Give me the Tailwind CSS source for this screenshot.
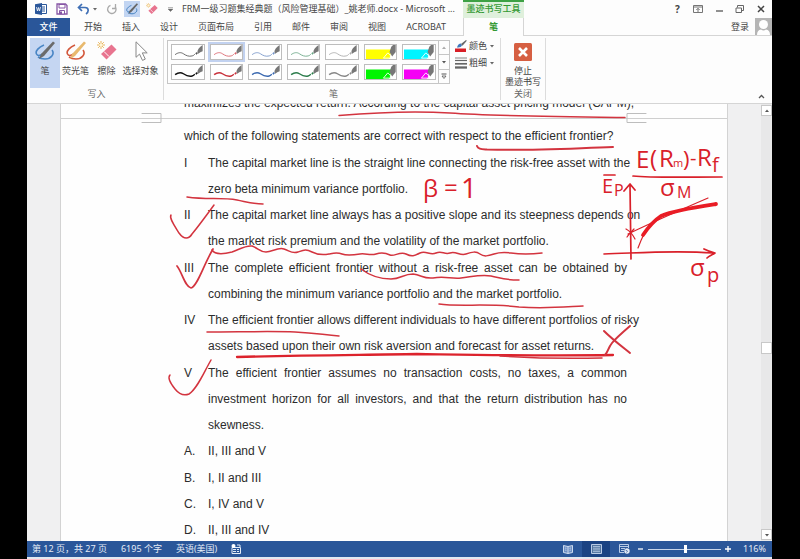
<!DOCTYPE html>
<html lang="zh-CN">
<head>
    <meta charset="UTF-8">
    <meta name="viewport" content="width=device-width, initial-scale=1.0">
    <title>FRM一级习题集经典题（风险管理基础）_姚老师.docx - Microsoft Word</title>
    <script src="https://cdn.jsdelivr.net/npm/@tailwindcss/browser@4"></script>
</head>
<body class="bg-black">
    <!-- Shared icon shapes -->
    <svg class="hidden" aria-hidden="true">
        <symbol id="pen-thin" viewBox="0 0 34 16">
            <path d="M2.500 11C6 8.500 9 8 12 10S18 13.500 22 12.500q2-.5 3-2" fill="none" stroke="currentColor" stroke-width="1"/>
            <path d="M25.500 9.500l2-1.500 1 1.500-1.500 1.500z" fill="currentColor"/>
            <path d="M28 8q0-4 6-8v7q-3 1-5 3z" fill="#777"/>
        </symbol>
        <symbol id="pen-thick" viewBox="0 0 34 16">
            <path d="M2.500 11C6 8.500 9 8 12 10S18 13.500 22 12.500q2-.5 3-2" fill="none" stroke="currentColor" stroke-width="1.700"/>
            <path d="M25.500 9.500l2-1.500 1 1.500-1.500 1.500z" fill="currentColor"/>
            <path d="M28 8q0-4 6-8v7q-3 1-5 3z" fill="#777"/>
        </symbol>
        <symbol id="marker" viewBox="0 0 34 16">
            <path d="M0 5h30l-4 11H0z" fill="currentColor"/>
            <path d="M20 15l5-6 3 3v3z" fill="currentColor" stroke="#fff" stroke-width="1"/>
            <path d="M27 8l2-6 2-2h3v8l-4 5z" fill="#777"/>
        </symbol>
        <symbol id="ink-pen" viewBox="0 0 20 20">
            <path d="M9 4C4 6 0 10 1.500 13s6 1 10-3M17 9c3 4-1 9-7 9-3 0-5-.5-7-2" fill="none" stroke="currentColor" stroke-width="1.600"/>
            <path d="M18 .5l2 1.500L9 15l-5 3 2-5z"/>
        </symbol>
        <symbol id="eraser" viewBox="0 0 20 20">
            <path d="M14.500 3.500l5 5-10 10-5.500-5.500z" fill="#e8748f"/>
            <path d="M7 10.500l5 5" stroke="#fff" stroke-width="1"/>
            <path d="M4 0v8M0 4h8M1.200 1.200l5.600 5.600M6.800 1.200L1.200 6.800" stroke="#e9b65c" stroke-width="1"/>
            <circle cx="4" cy="4" r="1.500" fill="#fff6d8"/>
        </symbol>
    </svg>

    <div class="mr-7 ml-[27px] flex h-screen flex-col bg-[#fdfdfd] text-[9px] leading-3 text-[#444] [font-family:'Noto_Sans','Noto_Sans_CJK_SC',sans-serif]">
        <!-- Title bar -->
        <header class="flex h-[18px] shrink-0 items-center">
            <div class="flex w-[155px] items-center pl-2">
                <svg class="h-3 w-3" viewBox="0 0 12 12" aria-label="Word">
                    <path d="M6 1.500h5.500v9H6z" fill="#fff" stroke="#2b579a"/>
                    <path d="M7 4h3M7 6h3M7 8h3" stroke="#2b579a"/>
                    <path d="M0 1.300L7 0v12l-7-1.300z" fill="#2b579a"/>
                    <path d="M1.500 4l1 4 1-3.500 1 3.500 1-4" fill="none" stroke="#fff" stroke-width=".8"/>
                </svg>
                <button class="ml-[9px]" aria-label="保存">
                    <svg class="h-3 w-3" viewBox="0 0 12 12"><path d="M1 1h8.500L11 2.500V11H1z" fill="#fff" stroke="#8756a5" stroke-width="1.300"/><path d="M3 1.500h6v3.500H3zM3.500 7.500h5V11h-5z" fill="#fff" stroke="#8756a5"/><path d="M4 8.500h2V11H4z" fill="#8756a5"/></svg>
                </button>
                <button class="ml-[9px] flex items-center gap-1" aria-label="撤消">
                    <svg class="h-3 w-3" viewBox="0 0 12 12"><path d="M1.500 4.500H8c4 0 4 4.500 1 6.500M5 1L1.500 4.500 5 8" fill="none" stroke="#3f6fb5" stroke-width="1.700"/></svg>
                    <svg class="h-1 w-1" viewBox="0 0 4 4"><path d="M0 1h4L2 3.500z" fill="#666"/></svg>
                </button>
                <button class="ml-[9px]" aria-label="恢复">
                    <svg class="h-3 w-3" viewBox="0 0 12 12"><path d="M4.500 2.300A4.200 4.200 0 1 0 9 3.500M6 5.500h3.500V1" fill="none" stroke="#aaa" stroke-width="1.300"/></svg>
                </button>
                <button class="ml-[6px] flex h-4 w-4 items-center justify-center bg-[#c2d5f2]" aria-label="笔">
                    <svg class="h-3 w-3 fill-[#666] text-[#3f7dbd]"><use href="#ink-pen"/></svg>
                </button>
                <button class="ml-[6px]" aria-label="橡皮擦"><svg class="h-3 w-3"><use href="#eraser"/></svg></button>
                <button class="ml-[10px]" aria-label="自定义快速访问工具栏">
                    <svg class="h-[5px] w-[5px]" viewBox="0 0 5 5"><path d="M0 .5h5M0 2h5L2.500 4.500z" fill="#666" stroke="#777" stroke-width=".5"/></svg>
                </button>
            </div>
            <h1 class="w-[281px] whitespace-nowrap">FRM一级习题集经典题（风险管理基础）_姚老师.docx - Microsoft ...</h1>
            <div class="h-full w-[61px] border-t-2 border-[#3da144] bg-[#dff0dc] pt-px text-center font-medium text-[#339933]">墨迹书写工具</div>
            <div class="ml-auto flex items-center gap-[11px] pr-[6px]">
                <button class="w-[9px] text-[10px] font-bold" aria-label="帮助">?</button>
                <button aria-label="功能区显示选项">
                    <svg class="h-[10px] w-[10px]" viewBox="0 0 10 10"><path d="M.5 1.500h9v7h-9zM.5 3h9M5 8V4.500M3.300 6L5 4.300 6.700 6" fill="none" stroke="#666" stroke-width=".9"/></svg>
                </button>
                <button aria-label="最小化"><svg class="h-[10px] w-[10px]" viewBox="0 0 10 10"><path d="M2 7h7" stroke="#555" stroke-width="1.300"/></svg></button>
                <button aria-label="还原"><svg class="h-[10px] w-[10px]" viewBox="0 0 10 10"><path d="M2.500 3.500v-2h6v5h-2M1 4h5.500v4.500H1z" fill="none" stroke="#666"/></svg></button>
                <button aria-label="关闭"><svg class="h-[10px] w-[10px]" viewBox="0 0 10 10"><path d="M2 2l6 6M8 2L2 8" stroke="#444" stroke-width="1.500"/></svg></button>
            </div>
        </header>

        <!-- Ribbon tabs -->
        <nav class="flex h-[18px] shrink-0 items-stretch">
            <button class="w-[43px] bg-[#2a5699] font-medium text-white">文件</button>
            <div class="flex w-[393px] items-center gap-5 border-b border-[#d5d5d5] pl-[14px] whitespace-nowrap">
                <button>开始</button>
                <button>插入</button>
                <button>设计</button>
                <button>页面布局</button>
                <button>引用</button>
                <button>邮件</button>
                <button>审阅</button>
                <button>视图</button>
                <button>ACROBAT</button>
            </div>
            <button class="w-[61px] border-x border-[#d5d5d5] font-bold text-[#339933]">笔</button>
            <div class="flex flex-1 items-center justify-end gap-[6px] border-b border-[#d5d5d5]">
                <a href="#">登录</a>
                <svg class="h-[17px] w-[17px] bg-[#b5b5b5]" viewBox="0 0 17 17"><circle cx="8.500" cy="6.500" r="4.500" fill="#fff"/><path d="M2 17q0-5 4-5.500 2.500 2 5 0 4 .5 4 5.500z" fill="#fff"/></svg>
            </div>
        </nav>

        <!-- Ribbon -->
        <section class="flex h-[68px] shrink-0 border-b border-[#d5d5d5] pt-[2px] pb-[3px]">
            <div class="flex w-[137px] flex-col justify-between border-r border-[#dcdcdc] pl-[3px]">
                <div class="flex">
                    <button class="flex h-[50px] w-[30px] flex-col items-center gap-1 bg-[#c5d6f2] pt-[3px]">
                        <svg class="h-5 w-5 fill-[#6b6b6b] text-[#4a86c5]"><use href="#ink-pen"/></svg>笔
                    </button>
                    <button class="flex h-[50px] w-[31px] flex-col items-center gap-1 pt-[3px]">
                        <svg class="h-5 w-5 fill-[#e8b96e] text-[#d3583c]"><use href="#ink-pen"/></svg>荧光笔
                    </button>
                    <button class="flex h-[50px] w-[31px] flex-col items-center gap-1 pt-[3px]">
                        <svg class="h-5 w-5"><use href="#eraser"/></svg>擦除
                    </button>
                    <button class="flex h-[50px] w-[37px] flex-col items-center gap-1 pt-[3px] whitespace-nowrap">
                        <svg class="h-5 w-5" viewBox="0 0 20 20"><path d="M5 .8v15.500l3.500-3.200 3 6.300 2.800-1.300-3-6.200h4.900z" fill="#fff" stroke="#888"/></svg>选择对象
                    </button>
                </div>
                <div class="text-center text-[#666]">写入</div>
            </div>

            <div class="flex w-[337px] flex-col justify-between border-r border-[#dcdcdc] pl-[3px]">
                <div class="flex gap-[5px] pt-[2px]">
                    <!-- Pen gallery -->
                    <div class="flex h-11 w-[283px] border border-[#c6c6c6]">
                        <div class="grid flex-1 grid-cols-7 gap-x-px py-px pl-px">
                            <button class="h-5 border border-transparent p-px" aria-label="黑色细笔"><svg class="h-full w-full border border-[#bdbdbd] bg-white text-[#555]"><use href="#pen-thin"/></svg></button>
                            <button class="h-5 bg-[#c2d2f0] p-[2px]" aria-label="红色细笔"><svg class="h-full w-full border border-[#bdbdbd] bg-white text-[#d9636b]"><use href="#pen-thin"/></svg></button>
                            <button class="h-5 border border-transparent p-px" aria-label="蓝色细笔"><svg class="h-full w-full border border-[#bdbdbd] bg-white text-[#7796c8]"><use href="#pen-thin"/></svg></button>
                            <button class="h-5 border border-transparent p-px" aria-label="绿色细笔"><svg class="h-full w-full border border-[#bdbdbd] bg-white text-[#6aa787]"><use href="#pen-thin"/></svg></button>
                            <button class="h-5 border border-transparent p-px" aria-label="灰色细笔"><svg class="h-full w-full border border-[#bdbdbd] bg-white text-[#aaa]"><use href="#pen-thin"/></svg></button>
                            <button class="h-5 border border-transparent p-px" aria-label="黄色荧光笔"><svg class="h-full w-full border border-[#bdbdbd] bg-white text-[#ffff00]"><use href="#marker"/></svg></button>
                            <button class="h-5 border border-transparent p-px" aria-label="青色荧光笔"><svg class="h-full w-full border border-[#bdbdbd] bg-white text-[#00f4ff]"><use href="#marker"/></svg></button>
                            <button class="h-5 border border-transparent p-px" aria-label="黑色粗笔"><svg class="h-full w-full border border-[#bdbdbd] bg-white text-[#111]"><use href="#pen-thick"/></svg></button>
                            <button class="h-5 border border-transparent p-px" aria-label="红色粗笔"><svg class="h-full w-full border border-[#bdbdbd] bg-white text-[#c8323c]"><use href="#pen-thick"/></svg></button>
                            <button class="h-5 border border-transparent p-px" aria-label="蓝色粗笔"><svg class="h-full w-full border border-[#bdbdbd] bg-white text-[#3b69b0]"><use href="#pen-thick"/></svg></button>
                            <button class="h-5 border border-transparent p-px" aria-label="绿色粗笔"><svg class="h-full w-full border border-[#bdbdbd] bg-white text-[#2d7d4c]"><use href="#pen-thick"/></svg></button>
                            <button class="h-5 border border-transparent p-px" aria-label="灰色粗笔"><svg class="h-full w-full border border-[#bdbdbd] bg-white text-[#888]"><use href="#pen-thick"/></svg></button>
                            <button class="h-5 border border-transparent p-px" aria-label="绿色荧光笔"><svg class="h-full w-full border border-[#bdbdbd] bg-white text-[#00f500]"><use href="#marker"/></svg></button>
                            <button class="h-5 border border-transparent p-px" aria-label="粉色荧光笔"><svg class="h-full w-full border border-[#bdbdbd] bg-white text-[#f500f5]"><use href="#marker"/></svg></button>
                        </div>
                        <div class="flex w-[11px] flex-col divide-y divide-[#c6c6c6] border-l border-[#c6c6c6]">
                            <button class="flex flex-1 items-center justify-center" aria-label="上一行"><svg class="h-1 w-1" viewBox="0 0 4 4"><path d="M0 3h4L2 .5z" fill="#aaa"/></svg></button>
                            <button class="flex flex-1 items-center justify-center" aria-label="下一行"><svg class="h-1 w-1" viewBox="0 0 4 4"><path d="M0 1h4L2 3.500z" fill="#555"/></svg></button>
                            <button class="flex flex-1 items-center justify-center" aria-label="其他"><svg class="h-[6px] w-[6px]" viewBox="0 0 6 6"><path d="M.5 1h5" stroke="#555"/><path d="M1 3h4L3 5.500z" fill="none" stroke="#555" stroke-width=".8"/></svg></button>
                        </div>
                    </div>
                    <div class="flex flex-col gap-[5px]">
                        <button class="flex items-center gap-[2px]">
                            <svg class="h-3 w-3" viewBox="0 0 12 12"><path d="M0 8.500h11V12H0z" fill="#d81e26"/><path d="M2 7.500q1-4 4-4l1 2q-1 2.500-5 2z" fill="#3f78bd"/><path d="M6 4l5-4 .8.800-4.300 5z" fill="#666"/></svg>
                            颜色
                            <svg class="ml-px h-1 w-1" viewBox="0 0 4 4"><path d="M0 1h4L2 3.500z" fill="#666"/></svg>
                        </button>
                        <button class="flex items-center gap-[2px]">
                            <svg class="h-3 w-3" viewBox="0 0 12 12"><path d="M0 1h12" stroke="#666" stroke-width=".8"/><path d="M0 3.500h12" stroke="#666" stroke-width="1.200"/><path d="M0 6.800h12" stroke="#666" stroke-width="1.700"/><path d="M0 10.500h12" stroke="#666" stroke-width="2.300"/></svg>
                            粗细
                            <svg class="ml-px h-1 w-1" viewBox="0 0 4 4"><path d="M0 1h4L2 3.500z" fill="#666"/></svg>
                        </button>
                    </div>
                </div>
                <div class="text-center text-[#666]">笔</div>
            </div>

            <div class="flex w-[45px] flex-col items-center justify-between border-r border-[#dcdcdc] pt-[5px]">
                <button class="flex flex-col items-center leading-[11px] whitespace-nowrap">
                    <svg class="mb-1 h-[18px] w-[18px]" viewBox="0 0 18 18"><rect width="18" height="18" rx="1.500" fill="#d65f42"/><path d="M5 5l8 8M13 5l-8 8" stroke="#fff" stroke-width="2.600"/></svg>
                    停止<br>墨迹书写
                </button>
                <div class="text-[#666]">关闭</div>
            </div>
            <button class="mt-auto ml-auto pr-[7px]" aria-label="折叠功能区"><svg class="h-[7px] w-[7px]" viewBox="0 0 7 7"><path d="M1 5l2.500-2.500L6 5" fill="none" stroke="#555" stroke-width="1.300"/></svg></button>
        </section>

        <!-- Document area -->
        <main class="flex min-h-0 flex-1 bg-[#f0f0f1]">
            <div class="w-[34px] shrink-0 border-r border-[#d3d3d3]"></div>
            <article class="relative flex-1 overflow-hidden bg-[#fefefe] text-[12px] leading-[26px] text-[#2c2c2c] [font-family:'Liberation_Sans',Arial,sans-serif]">
                <!-- End of the previous page -->
                <div class="flex h-[15px] items-start overflow-hidden border-b border-[#cfcfcf] pl-[123px]">
                    <p class="-mt-2 w-[443px] leading-[14px] whitespace-nowrap [text-align-last:justify]">maximizes the expected return. According to the capital asset pricing model (CAPM),</p>
                </div>

                <div class="w-[566px] pt-[4px] pl-[123px] whitespace-nowrap">
                    <p>which of the following statements are correct with respect to the efficient frontier?</p>
                    <dl class="grid grid-cols-[24px_minmax(0,1fr)]">
                        <dt class="pt-px">I</dt>
                        <dd class="pt-px">
                            <span class="block [text-align-last:justify]">The capital market line is the straight line connecting the risk-free asset with the</span>
                            zero beta minimum variance portfolio.
                        </dd>
                        <dt>II</dt>
                        <dd>
                            <span class="block [text-align-last:justify]">The capital market line always has a positive slope and its steepness depends on</span>
                            the market risk premium and the volatility of the market portfolio.
                        </dd>
                        <dt class="pt-px">III</dt>
                        <dd class="pt-px">
                            <span class="block [text-align-last:justify]">The complete efficient frontier without a risk-free asset can be obtained by</span>
                            combining the minimum variance portfolio and the market portfolio.
                        </dd>
                        <dt>IV</dt>
                        <dd>
                            <span class="block [text-align-last:justify]">The efficient frontier allows different individuals to have different portfolios of risky</span>
                            assets based upon their own risk aversion and forecast for asset returns.
                        </dd>
                        <dt class="pt-px">V</dt>
                        <dd class="pt-px">
                            <span class="block [text-align-last:justify]">The efficient frontier assumes no transaction costs, no taxes, a common</span>
                            <span class="block [text-align-last:justify]">investment horizon for all investors, and that the return distribution has no</span>
                            skewness.
                        </dd>
                        <dt>A.</dt>
                        <dd>II, III and V</dd>
                        <dt class="pt-px">B.</dt>
                        <dd class="pt-px">I, II and III</dd>
                        <dt>C.</dt>
                        <dd>I, IV and V</dd>
                        <dt>D.</dt>
                        <dd>II, III and IV</dd>
                    </dl>
                </div>

                <!-- Ink layer -->
                <svg class="absolute top-0 left-0 h-[437px] w-[666px]" viewBox="61 104 666 437" fill="none" stroke="#d3343f" stroke-width="1.500" stroke-linecap="round" stroke-linejoin="round">
                    <path d="M142 113.500h19v9h-19M646 113.500h-19v9h19" stroke="#bdbdbd" stroke-width="1"/>
                    <path d="M339 115.500C380 112 420 111 450 113c40 3 90 3.500 175 4.500"/>
                    <path d="M477 146c1 3 4 3 10 3.500 40 1.500 80-1 126-2.500" stroke-width="2"/>
                    <path d="M187 197c20 3 35 0 50 3 10 2 15 4 26 4"/>
                    <path d="M171 215c-2 3 3 10 8 18 5 7 10 6 13 1 5-6 14-18 22-29"/>
                    <path d="M212 250c3 5 12 4 20 2 8-3 14-7 20-6 6 2 8 6 14 6 6 0 12-5 18-3s8 5 14 3 8-3 14 0 12 3 17 2 8-2 13 0 12 1 18 0 10 2 16 0 10-1 14 1 10-4 16-1 8 2 14-1 10 3 16 0 8 2 14 0 10 3 16 1 10-3 14 0 8 2 14 0 10-2 17-1 14 2 31 0"/>
                    <path d="M177 266c5 6 8 21 14 22 6-1 12-22 22-39" stroke-width="1.700"/>
                    <path d="M361 269c8 6 18 10 30 10 10 0 12-5 22-5 9 1 10 5 20 4 12-2 18 1 28 0s20-4 30-2 12 4 28 4"/>
                    <path d="M439 304c20 3 50-1 80 3 25 2 45 0 64-1"/>
                    <path d="M207 332c30 0 65-1 88 0s28 3 44 4"/>
                    <path d="M237 357c70-2 120-2 180-3 70 1 120 2 196 1" stroke="#dc222c" stroke-width="2.300"/>
                    <path d="M500 356c30 2 60 3 102 2"/>
                    <path d="M604 331c8 8 16 14 26 22M630 326c-7 6-14 12-18 17s-4 9-7 12" stroke-width="2"/>
                    <path d="M170 375c-3 3 1 9 5 14s9 7 14 5c8-5 14-20 22-34"/>

                    <!-- Efficient frontier sketch -->
                    <g stroke="#d9202a" stroke-width="1.700">
                        <path d="M633 176c20 2 55 1 89 1"/>
                        <path d="M604 175h11M630 185l1 74M624 191l6-7 5 6M604 254c35-1 70-4 109-1M704 249c4 2 7 3 11 4-3 2-6 3-8 5"/>
                        <path d="M626 229c4 2 7 6 9 10M634 229c-3 3-5 5-7 8M628 234c25-12 50-23 80-36M638 248q3-8 6-14" stroke-width="1.200"/>
                        <path d="M643 235c4-6 9-13 18-19 14-6 35-9 55-12" stroke="#e91c25" stroke-width="3.800"/>
                    </g>

                    <g fill="#d9202a" stroke="none" font-family="'Open Sans', 'Noto Sans', sans-serif" font-size="24">
                        <text x="423" y="197">β</text>
                        <text x="444" y="196">=</text>
                        <text x="461" y="198" font-size="28">1</text>
                        <text x="636" y="168">E</text>
                        <text x="650" y="167">(</text>
                        <text x="659" y="167">R</text>
                        <text x="673" y="167" font-size="11">m</text>
                        <text x="683" y="167" font-size="22">)</text>
                        <text x="690" y="165" font-size="20">-</text>
                        <text x="697" y="166">R</text>
                        <text x="712" y="172" font-size="20">f</text>
                        <text x="602" y="193" font-size="20">E</text>
                        <text x="614" y="196" font-size="16">P</text>
                        <text x="660" y="196">σ</text>
                        <text x="677" y="198" font-size="16">M</text>
                        <text x="690" y="276">σ</text>
                        <text x="707" y="282" font-size="20">p</text>
                    </g>
                </svg>
            </article>
            <div class="w-[34px] shrink-0 border-l border-[#d3d3d3]"></div>
            <!-- Vertical scroll bar -->
            <div class="flex w-[11px] shrink-0 flex-col bg-[#e8e8e9] py-px">
                <button class="flex h-[11px] items-center justify-center border border-[#c8c8c8] bg-white" aria-label="向上滚动"><svg class="h-1 w-1" viewBox="0 0 4 4"><path d="M0 3h4L2 .5z" fill="#555"/></svg></button>
                <div class="grow-9"></div>
                <div class="h-3 border border-[#c8c8c8] bg-white"></div>
                <div class="grow-7"></div>
                <button class="flex h-[11px] items-center justify-center border border-[#c8c8c8] bg-white" aria-label="向下滚动"><svg class="h-1 w-1" viewBox="0 0 4 4"><path d="M0 1h4L2 3.500z" fill="#555"/></svg></button>
            </div>
        </main>

        <!-- Status bar -->
        <footer class="flex h-[18px] shrink-0 items-stretch border-b-2 border-[#e3e8f0] bg-[#2a5699] pl-[5px] whitespace-nowrap text-[#e4ebf6]">
            <div class="flex items-center gap-[14px]">
                <span>第 12 页，共 27 页</span>
                <span>6195 个字</span>
                <span>英语(美国)</span>
                <svg class="h-[10px] w-[10px]" viewBox="0 0 10 10"><path d="M1 3.500h8.500v6H1z" fill="none" stroke="#e4ebf6"/><path d="M2 5.500h3M2 7.500h3M6 5.500h2M6 7.500h2" stroke="#e4ebf6"/><circle cx="2.500" cy="2" r="2" fill="#fff"/><path d="M6 1h3v2" stroke="#e4ebf6" fill="none"/></svg>
            </div>
            <div class="ml-auto flex items-stretch">
                <button class="flex w-[28px] items-center justify-center" aria-label="阅读视图">
                    <svg class="h-[10px] w-[10px]" viewBox="0 0 10 10"><path d="M.5 1.500L5 2.500l4.500-1v7L5 9.500l-4.500-1zM5 2.500v7" fill="#6d8fc4" stroke="#dbe5f5" stroke-width=".9"/><path d="M2 4l1.500.3M2 6l1.500.3M6.500 4.300L8 4M6.500 6.300L8 6" stroke="#dbe5f5" stroke-width=".7"/></svg>
                </button>
                <button class="flex w-[28px] items-center justify-center bg-[#1b4383]" aria-label="页面视图">
                    <svg class="h-[10px] w-[11px]" viewBox="0 0 11 10"><path d="M.5.5h10v9H.5z" fill="#52749f" stroke="#b9cbe6"/><path d="M2 2.500h7M2 4.200h7M2 5.900h7M2 7.600h7" stroke="#c8d8ef" stroke-width=".7"/></svg>
                </button>
                <button class="flex w-[28px] items-center justify-center" aria-label="Web 版式视图">
                    <svg class="h-[10px] w-[11px]" viewBox="0 0 11 10"><path d="M5 8.500H.5v-8h9V4M.5 2.500h9M2 4.500h4M2 6.500h3" fill="none" stroke="#c8d8ef" stroke-width=".9"/><circle cx="8" cy="7" r="2.700" fill="#e4ebf6"/><path d="M6.500 6l2 1-1 1.500" fill="none" stroke="#2a5699" stroke-width=".7"/></svg>
                </button>
                <div class="flex items-center gap-1 pr-[6px]">
                    <button class="w-[6px]" aria-label="缩小"><svg class="h-[6px] w-[6px]" viewBox="0 0 6 6"><path d="M0 3h5" stroke="#fff" stroke-width="1.300"/></svg></button>
                    <input type="range" min="10" max="222" value="120" aria-label="显示比例" class="h-px w-[73px] appearance-none bg-[#c8d5ea] [&::-webkit-slider-thumb]:h-2 [&::-webkit-slider-thumb]:w-[3px] [&::-webkit-slider-thumb]:appearance-none [&::-webkit-slider-thumb]:bg-white">
                    <button class="w-[6px]" aria-label="放大"><svg class="h-[6px] w-[6px]" viewBox="0 0 6 6"><path d="M0 3h6M3 0v6" stroke="#fff" stroke-width="1.300"/></svg></button>
                    <span class="ml-2">116%</span>
                </div>
            </div>
        </footer>
    </div>
</body>
</html>
